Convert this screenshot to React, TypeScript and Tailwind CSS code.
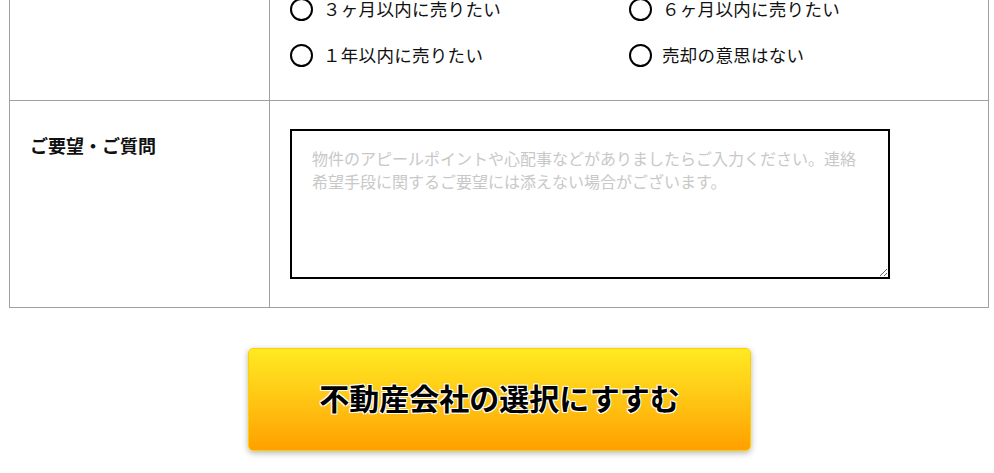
export default function App() {
  const options = ["３ヶ月以内に売りたい", "６ヶ月以内に売りたい", "１年以内に売りたい", "売却の意思はない"]

  return (
    <div
      className="min-h-screen bg-white text-[#111] overflow-hidden"
      style={{ fontFamily: '"Noto Sans CJK JP", "Noto Sans", sans-serif' }}
    >
      <div className="ml-[9px] w-[980px] -mt-[22px] border border-[#a0a0a0]">
        <div className="flex border-b border-[#a0a0a0]">
          <div className="w-[260px] shrink-0 border-r border-[#a0a0a0]" />
          <div className="flex-1 pl-[20px] pr-[20px] pt-[19px] pb-[33px]">
            <div className="grid grid-cols-2 gap-y-[23px]">
              {options.map((o) => (
                <label key={o} className="flex items-center h-[23px] cursor-pointer">
                  <span className="w-[23px] h-[23px] rounded-full border-2 border-black bg-white shrink-0" />
                  <span className="ml-[10px] text-[17.5px] leading-[23px] tracking-[0.3px] -translate-y-[1px]">{o}</span>
                </label>
              ))}
            </div>
          </div>
        </div>
        <div className="flex">
          <div className="w-[260px] shrink-0 border-r border-[#a0a0a0] pl-[20px] pt-[32px]">
            <span className="text-[18px] font-bold leading-[24px]">ご要望・ご質問</span>
          </div>
          <div className="flex-1 pl-[20px] pt-[28px] pb-[28px]">
            <textarea
              className="block w-[600px] h-[150px] border-2 border-black px-[20px] py-[16px] text-[16px] leading-[23px] outline-none placeholder:text-[#c8c8c8]"
              placeholder="物件のアピールポイントや心配事などがありましたらご入力ください。連絡希望手段に関するご要望には添えない場合がございます。"
            />
          </div>
        </div>
      </div>

      <div className="flex justify-center mt-[40px] pl-[5px]">
        <button
          className="w-[503px] h-[103px] pb-[5px] rounded-[5px] border border-[#ffd000] bg-gradient-to-b from-[#ffea22] to-[#ffa000] shadow-[0_2px_6px_rgba(0,0,0,0.3)] text-[30px] font-bold text-black [text-shadow:1px_1px_0_#fff,-1px_-1px_0_#fff,1px_-1px_0_#fff,-1px_1px_0_#fff]"
        >
          不動産会社の選択にすすむ
        </button>
      </div>
    </div>
  )
}
